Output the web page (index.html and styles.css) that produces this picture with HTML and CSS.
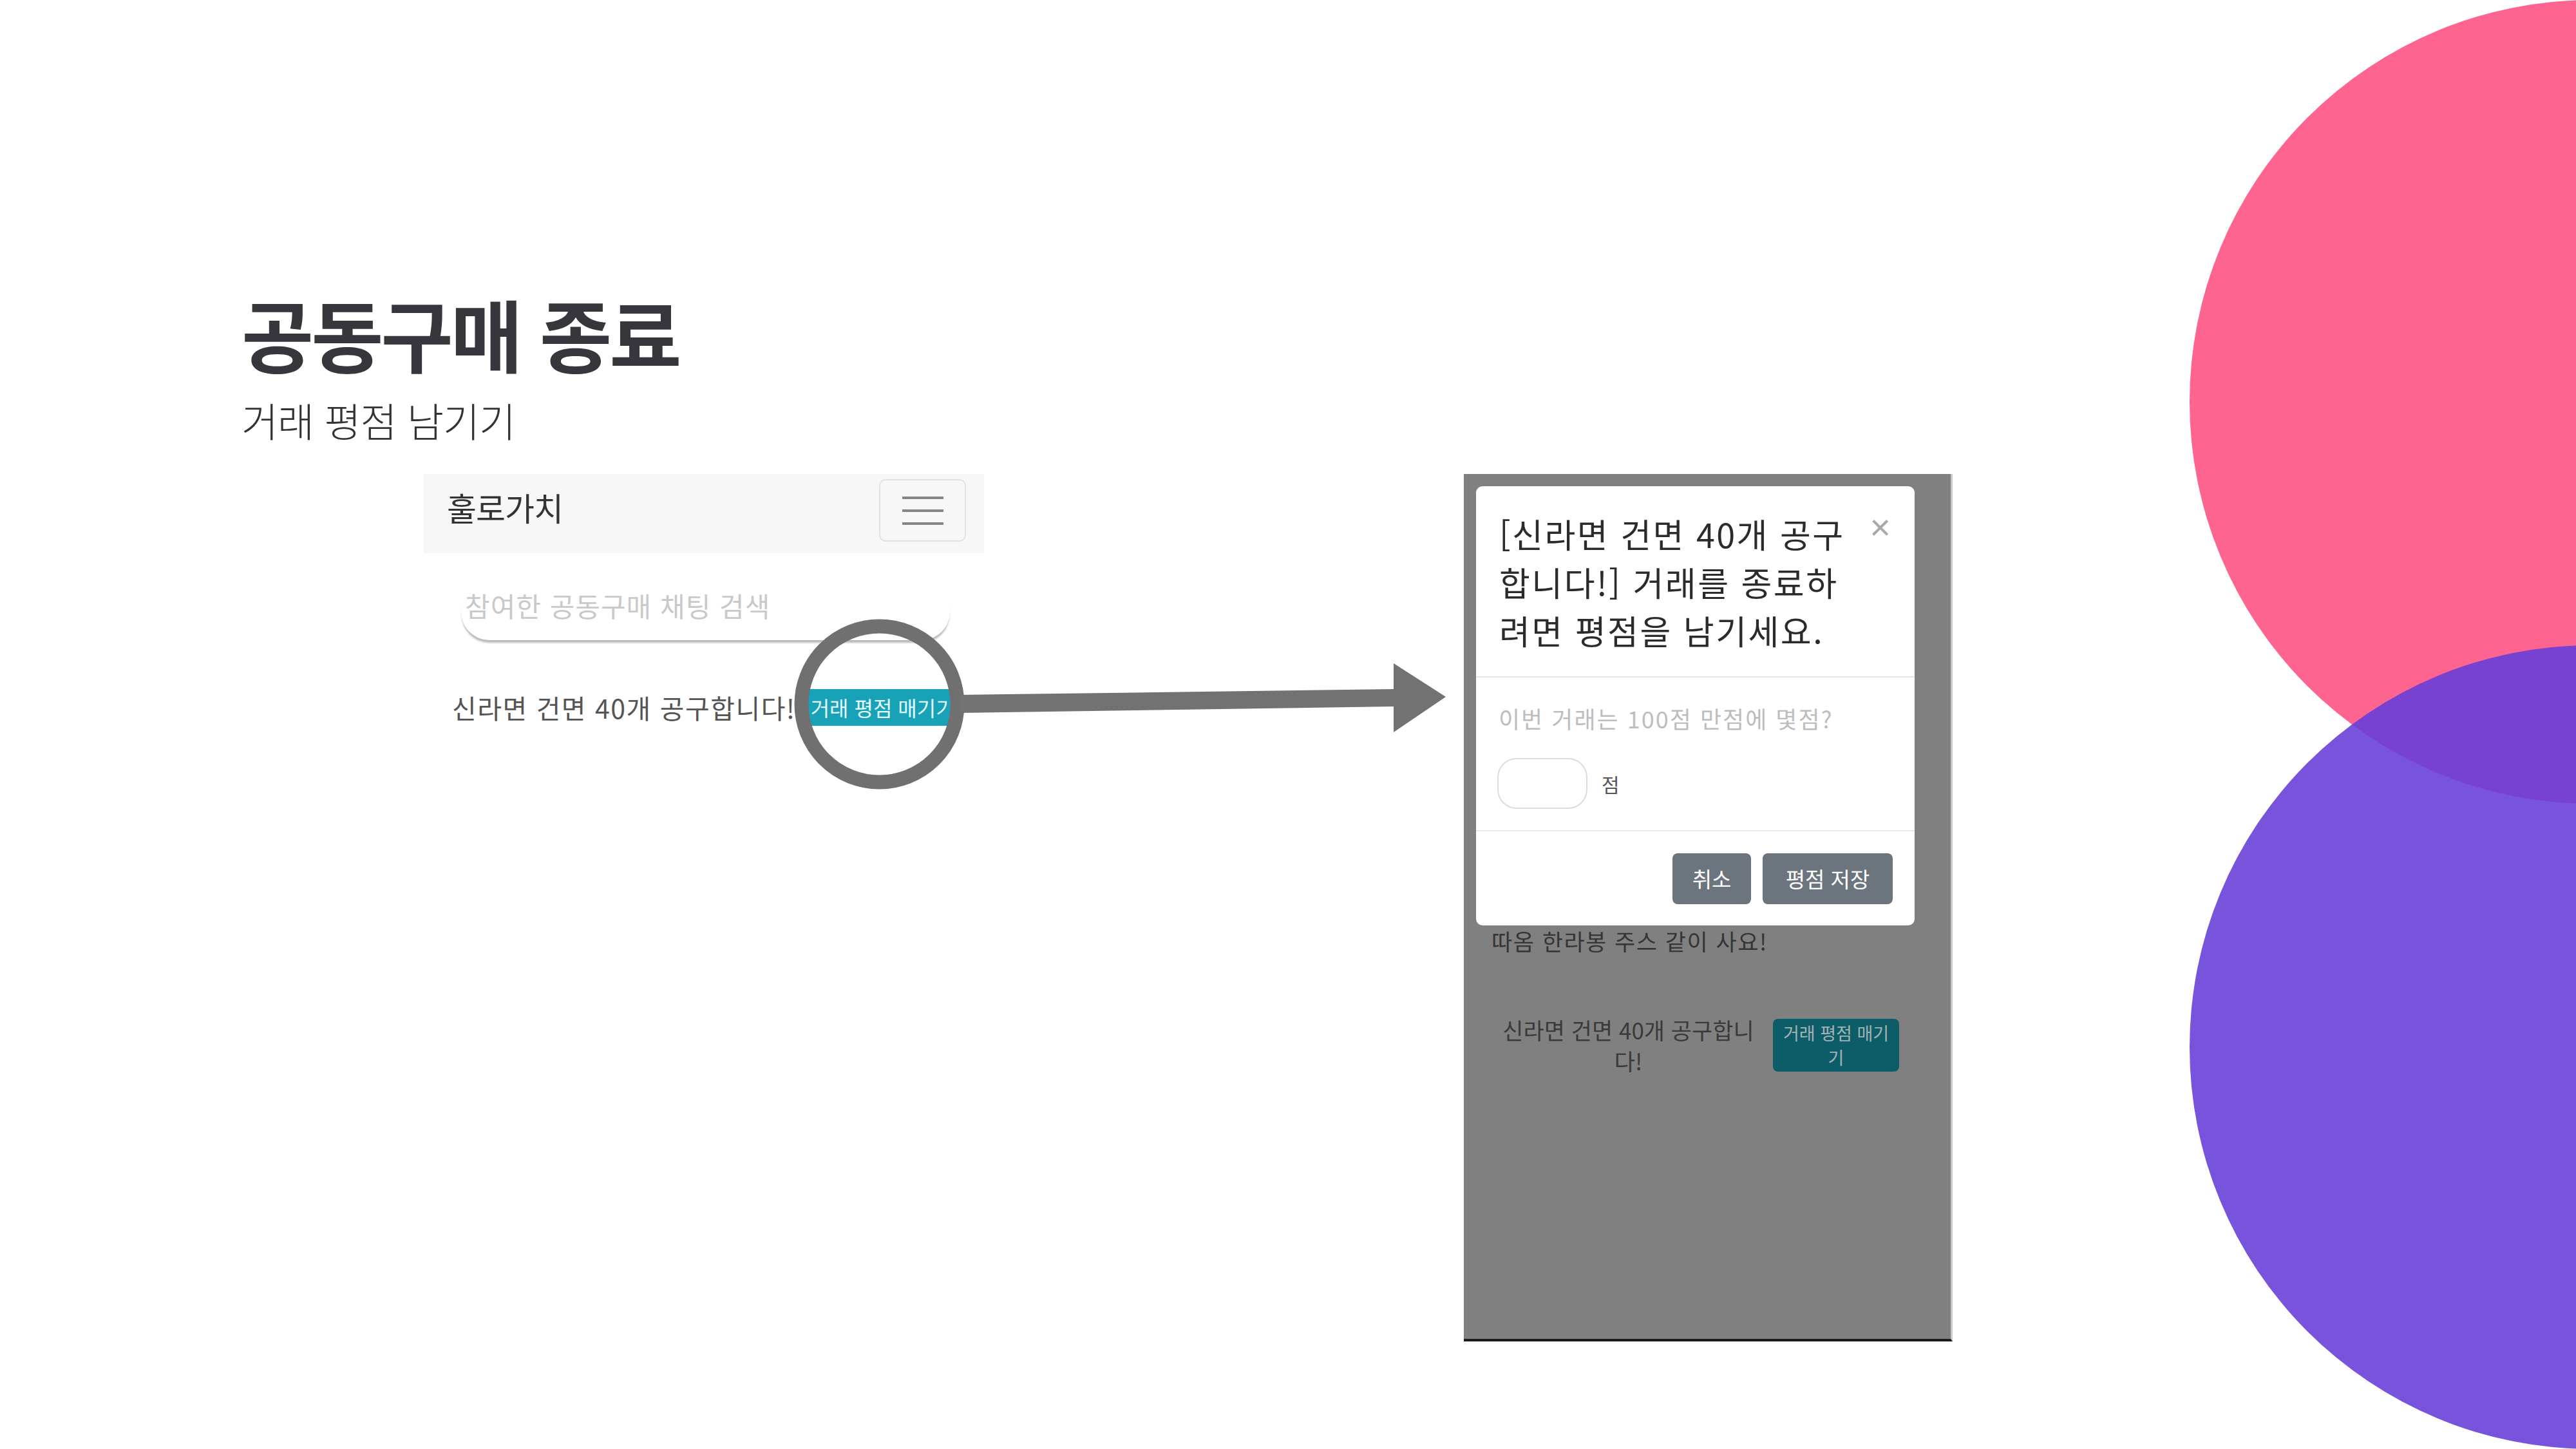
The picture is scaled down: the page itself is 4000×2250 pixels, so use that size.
FILE: index.html
```html
<!DOCTYPE html>
<html lang="ko">
<head>
<meta charset="utf-8">
<title>공동구매 종료</title>
<link rel="stylesheet" href="styles.css">
</head>
<body>
<svg class="decor" width="600" height="2250" viewBox="0 0 600 2250" aria-hidden="true">
  <circle cx="624" cy="624" r="624" fill="#fe6490"/>
  <circle cx="624" cy="1626" r="624" fill="rgb(103,62,216)" fill-opacity="0.89"/>
</svg>

<main class="slide">
  <h1 class="title">공동구매 종료</h1>
  <p class="subtitle">거래 평점 남기기</p>

  <div class="shots">
    <section class="phone-left">
      <nav class="navbar">
        <span class="brand">훌로가치</span>
        <span class="toggler"><i></i><i></i><i></i></span>
      </nav>
      <div class="search"><span class="placeholder">참여한 공동구매 채팅 검색</span></div>
      <div class="chat-row">
        <span class="chat-name">신라면 건면 40개 공구합니다!</span>
        <span class="btn-rate">거래 평점 매기기</span>
      </div>
    </section>

    <section class="phone-right">
      <div class="modal">
        <div class="modal-header">
          <p class="modal-title">[신라면 건면 40개 공구합니다!] 거래를 종료하려면 평점을 남기세요.</p>
          <span class="close">×</span>
        </div>
        <div class="modal-body">
          <p class="question">이번 거래는 100점 만점에 몇점?</p>
          <div class="score-row">
            <span class="score-input"></span>
            <span class="unit">점</span>
          </div>
        </div>
        <div class="modal-footer">
          <span class="btn-gray btn-cancel">취소</span>
          <span class="btn-gray btn-save">평점 저장</span>
        </div>
      </div>
      <p class="dim-line">따옴 한라봉 주스 같이 사요!</p>
      <div class="dim-row">
        <span class="dim-name">신라면 건면 40개 공구합니다!</span>
        <span class="dim-btn">거래 평점 매기기</span>
      </div>
    </section>
  </div>
</main>

<svg class="pointer" width="4000" height="2250" viewBox="0 0 4000 2250" aria-hidden="true">
  <circle cx="1365.5" cy="1093.5" r="121" fill="none" stroke="#707070" stroke-width="22"/>
  <polygon points="1490,1079 2164,1070 2164,1030 2245,1082 2164,1137 2164,1097 1490,1107" fill="#727272"/>
</svg>
</body>
</html>
```
FILE: styles.css
```css
html, body {
  margin: 0;
  padding: 0;
}
body {
  width: 4000px;
  height: 2250px;
  overflow: hidden;
  position: relative;
  background: #ffffff;
  font-family: "Noto Sans CJK KR", "Noto Sans", sans-serif;
  color: #333;
}

.decor {
  position: absolute;
  left: 3400px;
  top: 0;
  z-index: 0;
}

.pointer {
  position: absolute;
  left: 0;
  top: 0;
  z-index: 5;
  pointer-events: none;
}

.slide {
  position: relative;
  z-index: 1;
  padding: 455px 0 0 375px;
}

.title {
  margin: 0;
  font-size: 122px;
  line-height: 122px;
  font-weight: 700;
  letter-spacing: -4px;
  color: #36363c;
}

.subtitle {
  margin: 44px 0 0 0;
  font-size: 62px;
  line-height: 62px;
  font-weight: 300;
  letter-spacing: -1px;
  color: #333;
}

.shots {
  margin-top: 53px;
  display: flex;
  align-items: flex-start;
  padding-left: 283px;
}

/* ---------- left phone ---------- */
.phone-left {
  width: 870px;
}

.navbar {
  height: 123px;
  background: #f7f7f8;
  display: flex;
  justify-content: space-between;
  align-items: flex-start;
  padding: 0 28px 0 36px;
  box-sizing: border-box;
}

.brand {
  margin-top: 26px;
  font-size: 50px;
  line-height: 50px;
  letter-spacing: -1px;
  color: #333;
}

.toggler {
  margin-top: 8px;
  width: 135px;
  height: 97px;
  box-sizing: border-box;
  border: 2px solid #e2e2e4;
  border-radius: 10px;
  display: flex;
  flex-direction: column;
  align-items: center;
  justify-content: center;
  gap: 16px;
}
.toggler i {
  display: block;
  width: 64px;
  height: 4px;
  background: #858585;
}

.search {
  margin: 45px 0 0 58px;
  width: 759px;
  height: 90px;
  border-radius: 44px;
  box-shadow: 0 5px 3px -1px rgba(0, 0, 0, 0.28);
  display: flex;
  align-items: center;
  padding: 0 0 18px 6px;
  box-sizing: border-box;
}
.placeholder {
  font-size: 42px;
  line-height: 42px;
  letter-spacing: 1px;
  color: #c9c9c9;
}

.chat-row {
  margin-top: 76px;
  padding-left: 44px;
  display: flex;
  align-items: center;
  gap: 16px;
}
.chat-name {
  font-size: 41px;
  line-height: 57px;
  letter-spacing: 1.5px;
  color: #555;
}
.btn-rate {
  height: 57px;
  box-sizing: border-box;
  background: #17a2b8;
  color: #e6fbff;
  font-size: 32px;
  line-height: 57px;
  padding: 0 4px 0 7px;
  border-radius: 6px;
  white-space: nowrap;
}

/* ---------- right phone ---------- */
.phone-right {
  margin-left: 745px;
  width: 759px;
  height: 1347px;
  box-sizing: border-box;
  background: #808080;
  border-right: 3px solid #c9c9c9;
  border-bottom: 4px solid #1c1c1c;
  padding-top: 19px;
}

.modal {
  margin: 0 56px 0 19px;
  background: #fff;
  border-radius: 10px;
}

.modal-header {
  position: relative;
  padding: 36px 38px 34px 36px;
  border-bottom: 2px solid #e6e6e6;
}
.modal-title {
  margin: 0;
  width: 552px;
  font-size: 52px;
  line-height: 75px;
  letter-spacing: 2.5px;
  color: #2b2b2b;
}
.close {
  position: absolute;
  top: 36px;
  right: 37px;
  font-family: "Liberation Sans", sans-serif;
  font-size: 56px;
  line-height: 56px;
  color: #a9a9a9;
}

.modal-body {
  padding: 36px 38px 33px 33px;
  border-bottom: 2px solid #e9e9e9;
}
.question {
  margin: 0 0 0 2px;
  font-size: 36px;
  line-height: 54px;
  letter-spacing: 2px;
  color: #bdbdbd;
}
.score-row {
  margin-top: 35px;
  display: flex;
  align-items: center;
  gap: 22px;
}
.score-input {
  width: 140px;
  height: 79px;
  box-sizing: border-box;
  border: 2px solid #dcdcdc;
  border-radius: 30px;
}
.unit {
  font-size: 30px;
  line-height: 40px;
  color: #555;
}

.modal-footer {
  padding: 34px 34px 33px;
  display: flex;
  justify-content: flex-end;
  gap: 18px;
}
.btn-gray {
  height: 79px;
  background: #6c757d;
  color: #fff;
  font-size: 33px;
  line-height: 79px;
  text-align: center;
  border-radius: 8px;
}
.btn-cancel { width: 122px; }
.btn-save { width: 202px; }

.dim-line {
  margin: 0;
  padding-left: 43px;
  font-size: 35px;
  line-height: 48px;
  letter-spacing: 1.5px;
  color: #353535;
}

.dim-row {
  margin-top: 90px;
  padding-left: 43px;
  display: flex;
  align-items: center;
}
.dim-name {
  width: 425px;
  text-align: center;
  font-size: 35px;
  line-height: 48px;
  color: #3a3a3a;
}
.dim-btn {
  margin-left: 12px;
  width: 196px;
  height: 82px;
  box-sizing: border-box;
  padding: 3px 8px;
  background: #0d5d68;
  color: #a3b2b5;
  font-size: 27px;
  line-height: 38px;
  text-align: center;
  border-radius: 8px;
}
```
